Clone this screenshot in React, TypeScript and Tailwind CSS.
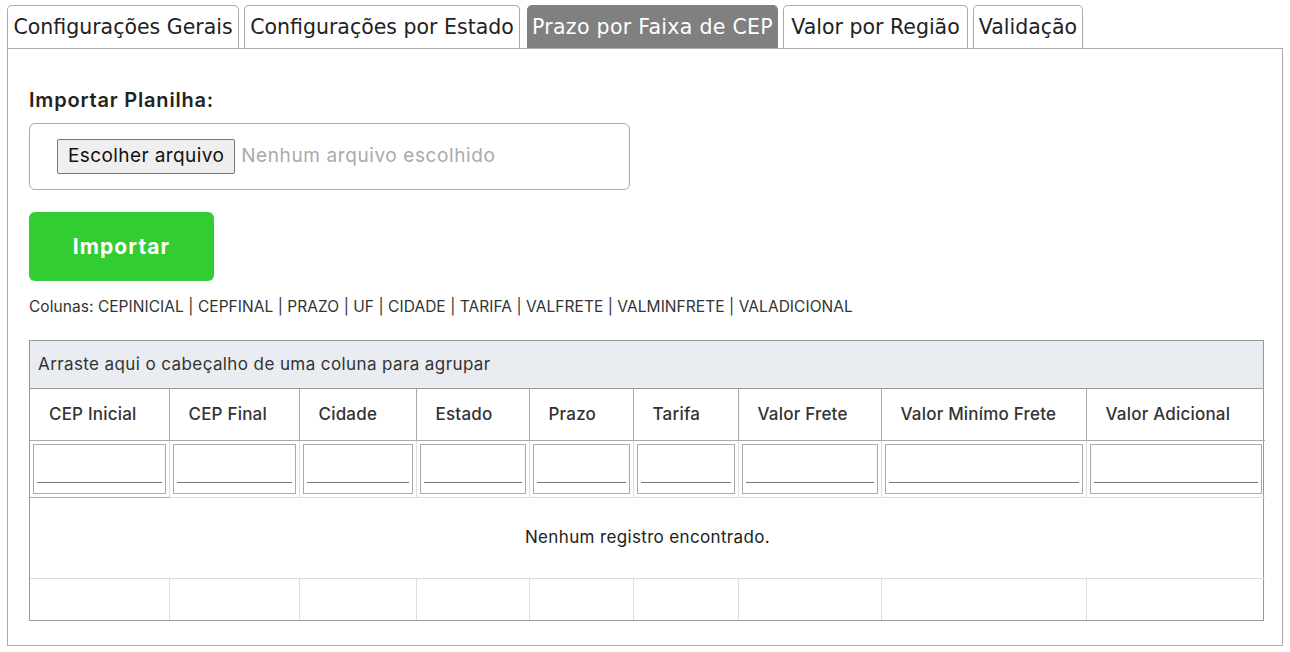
import React from 'react';

const tabs = [
  { label: 'Configurações Gerais', width: 232, active: false },
  { label: 'Configurações por Estado', width: 276, active: false },
  { label: 'Prazo por Faixa de CEP', width: 251, active: true },
  { label: 'Valor por Região', width: 185, active: false },
  { label: 'Validação', width: 110, active: false },
];

const columns = [
  { label: 'CEP Inicial', width: 139 },
  { label: 'CEP Final', width: 130 },
  { label: 'Cidade', width: 117 },
  { label: 'Estado', width: 113 },
  { label: 'Prazo', width: 104 },
  { label: 'Tarifa', width: 105 },
  { label: 'Valor Frete', width: 143 },
  { label: 'Valor Minímo Frete', width: 205 },
  { label: 'Valor Adicional', width: 179 },
];

const fieldNames = ['CEPINICIAL', 'CEPFINAL', 'PRAZO', 'UF', 'CIDADE', 'TARIFA', 'VALFRETE', 'VALMINFRETE', 'VALADICIONAL'];

export default function App() {
  return (
    <div className="w-[1290px] h-[652px] bg-white text-[#333] font-['Inter',sans-serif]">
      <div className="flex items-end pl-[7px] pt-[5px]">
        {tabs.map((tab, i) => (
          <div
            key={tab.label}
            style={{ width: tab.width }}
            className={
              (i === 0 ? '' : i === 2 ? 'ml-[7px] ' : 'ml-[5px] ') +
              (tab.active
                ? "h-[43px] flex items-center justify-center rounded-t-[5px] border border-b-0 border-[#808080] bg-[#808080] text-white text-[20.5px] tracking-[0.3px] font-['DejaVu_Sans',sans-serif]"
                : "h-[43px] flex items-center justify-center rounded-t-[5px] border border-b-0 border-[#aaa] bg-white text-[#222] text-[20.5px] font-['DejaVu_Sans',sans-serif]")
            }
          >
            {tab.label}
          </div>
        ))}
      </div>

      <div className="mx-[7px] h-[598px] border border-[#aaa] px-[21px] pt-[36px]">
        <h3 className="text-[20px] tracking-[0.8px] font-semibold text-[#222] leading-[30px]">Importar Planilha:</h3>

        <div className="mt-[8px] w-[601px] h-[67px] border border-[#aaa] rounded-[6px] flex items-center pl-[27px]">
          <div className="h-[35px] px-[10px] flex items-center bg-[#efefef] border border-[#767676] rounded-[2px] text-[19px] tracking-[0.4px] text-[#111]">
            Escolher arquivo
          </div>
          <span className="ml-[6px] text-[19px] tracking-[0.6px] text-[#aaa]">Nenhum arquivo escolhido</span>
        </div>

        <button className="mt-[22px] w-[185px] h-[69px] rounded-[6px] bg-[#32cd32] text-white text-[21px] tracking-[1.1px] font-bold">
          Importar
        </button>

        <p className="mt-[16px] text-[15.5px] tracking-[0.05px] leading-[20px] text-[#333]">
          Colunas:{' '}
          {fieldNames.map((name, i) => (
            <span key={name}>
              {name}
              {i < fieldNames.length - 1 ? ' | ' : ''}
            </span>
          ))}
        </p>

        <div className="mt-[23px] w-[1235px] border border-[#999]">
          <div className="h-[48px] flex items-center px-[8px] bg-[#e9ecf0] border-b border-[#999] text-[17px] tracking-[0.4px]">
            Arraste aqui o cabeçalho de uma coluna para agrupar
          </div>
          <table className="w-full table-fixed border-collapse">
            <colgroup>
              {columns.map((c) => (
                <col key={c.label} style={{ width: c.width }} />
              ))}
            </colgroup>
            <thead>
              <tr className="h-[51px]">
                {columns.map((c, i) => (
                  <th
                    key={c.label}
                    className={
                      i === 0
                        ? 'text-left font-medium text-[17px] tracking-[0.2px] pl-[19px] border-b border-[#aaa]'
                        : 'text-left font-medium text-[17px] tracking-[0.2px] pl-[19px] border-l border-b border-[#aaa]'
                    }
                  >
                    {c.label}
                  </th>
                ))}
              </tr>
              <tr className="h-[56px]">
                {columns.map((c, i) => (
                  <td
                    key={c.label}
                    className={i === 0 ? 'p-[3px] border-b border-[#aaa]' : 'p-[3px] border-l border-b border-[#ddd]'}
                  >
                    <div className="h-[50px] border border-[#aaa] px-[3px] flex items-end pb-[10px]">
                      <div className="w-full border-b border-[#777]" />
                    </div>
                  </td>
                ))}
              </tr>
            </thead>
            <tbody>
              <tr className="h-[81px]">
                <td colSpan={9} className="text-center text-[17px] tracking-[0.35px] text-[#222] border-b border-[#ddd]">
                  Nenhum registro encontrado.
                </td>
              </tr>
              <tr className="h-[42px]">
                {columns.map((c, i) => (
                  <td key={c.label} className={i === 0 ? '' : 'border-l border-[#ddd]'} />
                ))}
              </tr>
            </tbody>
          </table>
        </div>
      </div>
    </div>
  );
}
